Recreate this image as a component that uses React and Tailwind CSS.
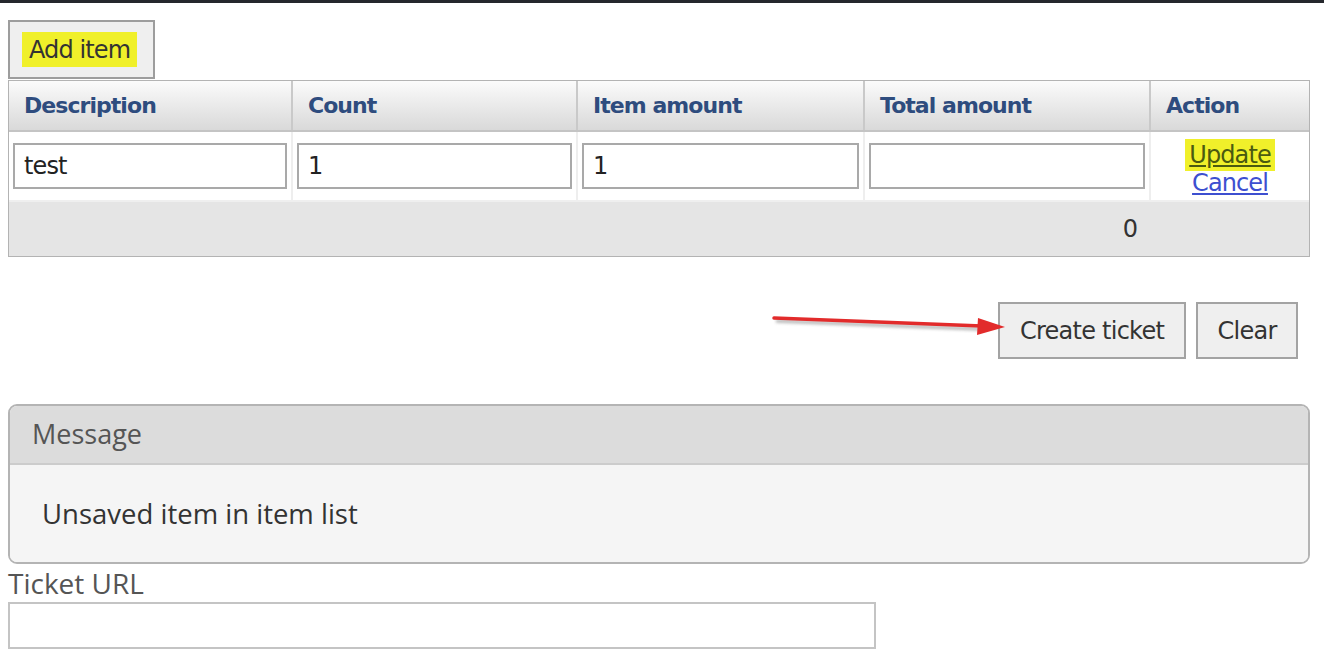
import React from "react";

const tah = { fontFamily: '"DejaVu Sans", Verdana, sans-serif' };
const open = { fontFamily: '"Open Sans", "DejaVu Sans", sans-serif' };

function Arrow() {
  return (
    <svg className="absolute left-[-226px] top-[7px]" width="236" height="32" viewBox="0 0 236 32">
      <defs>
        <filter id="sh" x="-10%" y="-50%" width="120%" height="200%">
          <feGaussianBlur stdDeviation="1.6" />
        </filter>
      </defs>
      <g filter="url(#sh)" opacity="0.4">
        <line x1="4" y1="12" x2="208" y2="20" stroke="#555" strokeWidth="3.5" />
      </g>
      <line x1="2" y1="9" x2="210" y2="17" stroke="#e22b2b" strokeWidth="3.5" strokeLinecap="round" />
      <polygon points="206,9 233,18 205,26" fill="#e22b2b" />
    </svg>
  );
}

export default function App() {
  const cols = "grid grid-cols-[284px_285px_287px_286px_1fr]";
  return (
    <div className="w-[1324px] h-[658px] bg-white overflow-hidden">
      <div className="h-[3px] bg-[#25282d]" />
      <div className="pl-[8px] pr-[14px] pt-[17px]">
        <div
          className="w-[147px] h-[59px] border-2 border-[#9d9d9d] bg-[#efefef] flex items-center pl-[12px]"
          style={tah}
        >
          <span className="bg-[#f0f02a] px-[7px] h-[35px] flex items-center text-[24px] text-[#333] tracking-[-0.9px]">
            Add item
          </span>
        </div>

        <div className="mt-[1px] border border-[#b3b3b3]">
          <div
            className={`${cols} h-[51px] bg-gradient-to-b from-[#fbfbfb] to-[#d9d9d9] border-b-2 border-[#c4c4c4]`}
            style={tah}
          >
            {["Description", "Count", "Item amount", "Total amount", "Action"].map((h, i) => (
              <div
                key={h}
                className={`flex items-center pl-[15px] text-[22px] font-bold text-[#2e4c7e] tracking-[-0.95px] ${
                  i < 4 ? "border-r-2 border-[#c9c9c9]" : ""
                }`}
              >
                {h}
              </div>
            ))}
          </div>
          <div className={`${cols} h-[68px] bg-white`} style={tah}>
            {["test", "1", "1", ""].map((v, i) => (
              <div key={i} className="flex items-center px-[4px] border-r-2 border-[#eeeeee]">
                <div className="w-full h-[46px] border-2 border-[#a9a9a9] flex items-center pl-[9px] text-[24px] text-[#222] tracking-[-0.9px]">
                  {v}
                </div>
              </div>
            ))}
            <div className="flex flex-col items-center pt-[7px]">
              <span className="bg-[#f0f02a] px-[4px] h-[32px] flex items-center text-[24px] text-[#4a5a10] underline tracking-[-0.9px]">
                Update
              </span>
              <span className="text-[24px] leading-[24px] text-[#3d4fd0] underline tracking-[-0.9px]">Cancel</span>
            </div>
          </div>
          <div className={`${cols} h-[56px] bg-[#e5e5e5] border-t-2 border-[#efefef]`} style={tah}>
            <div />
            <div />
            <div />
            <div className="flex items-center justify-end pr-[13px] text-[24px] text-[#333]">0</div>
            <div />
          </div>
        </div>

        <div className="flex justify-end gap-[10px] mt-[45px] pr-[12px]" style={tah}>
          <div className="relative">
            <Arrow />
            <div className="w-[188px] h-[57px] border-2 border-[#a3a3a3] bg-[#efefef] flex items-center justify-center text-[24px] text-[#333] tracking-[-0.75px]">
              Create ticket
            </div>
          </div>
          <div className="w-[102px] h-[57px] border-2 border-[#a3a3a3] bg-[#efefef] flex items-center justify-center text-[24px] text-[#333] tracking-[-0.75px]">
            Clear
          </div>
        </div>

        <div className="mt-[45px] border-2 border-[#b4b4b4] rounded-[9px] overflow-hidden" style={open}>
          <div className="h-[59px] bg-[#dcdcdc] border-b-2 border-[#cccccc] flex items-center pl-[22px] text-[27px] text-[#555]">
            Message
          </div>
          <div className="h-[97px] bg-[#f5f5f5] flex items-center pl-[32px] text-[27.5px] text-[#333]">
            Unsaved item in item list
          </div>
        </div>

        <div className="text-[28px] text-[#555] leading-[32px] mt-[3px]" style={open}>
          Ticket URL
        </div>
        <div className="w-[868px] h-[47px] border-2 border-[#c4c4c4] mt-[3px]" />
      </div>
    </div>
  );
}
